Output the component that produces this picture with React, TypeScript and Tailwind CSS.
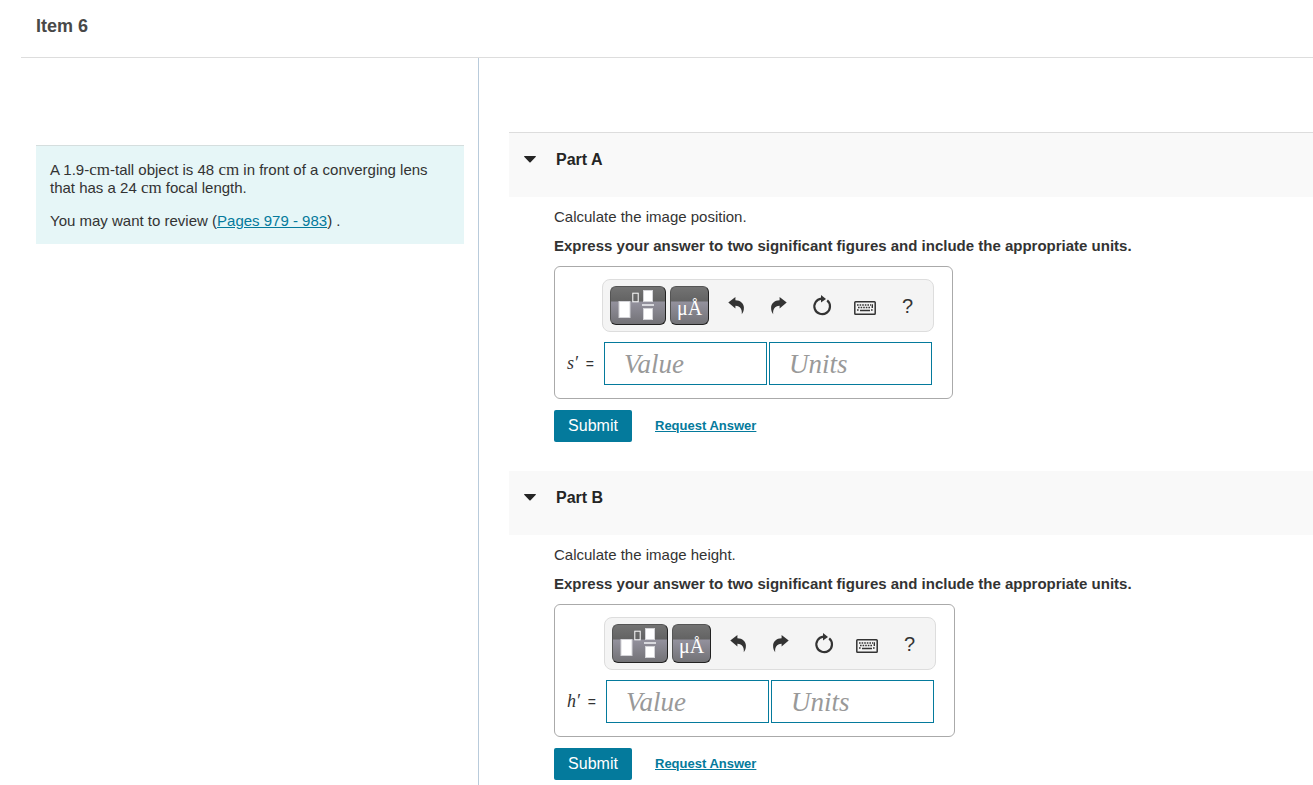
import { useState } from 'react';
import type { ReactNode } from 'react';

const ARIAL = "font-['Liberation_Sans',Arial,sans-serif]";
const SERIF = "font-['Liberation_Serif','Times_New_Roman',serif]";

function Unit({ children }: { children: ReactNode }) {
  return <span className={`${SERIF} text-[17px] leading-3`}>{children}</span>;
}

function TemplatesIcon() {
  return (
    <svg width="54" height="37" viewBox="0 0 54 37" fill="none" aria-hidden="true">
      <rect x="8" y="14.5" width="11" height="16" fill="#fff" stroke="#d4d4d8" />
      <rect x="21.8" y="6.2" width="5.4" height="8.6" stroke="#fff" />
      <rect x="32.5" y="3.5" width="9" height="11" fill="#fff" stroke="#d4d4d8" />
      <rect x="31" y="17" width="12" height="2" fill="#d9d9de" />
      <rect x="32.5" y="21.5" width="9" height="11" fill="#fff" stroke="#d4d4d8" />
    </svg>
  );
}

function UndoIcon({ flipped = false }: { flipped?: boolean }) {
  return (
    <svg
      width="16"
      height="18"
      viewBox="0 0 16 18"
      fill="#333"
      aria-hidden="true"
      className={flipped ? '-scale-x-100' : ''}
    >
      <path d="M0.3 5.6 7.4 0V3.3C12.6 3.4 15.8 6.5 15.9 10.6 16 13.2 15.2 15.6 13.8 17.2 14.2 12.4 12.4 9.2 7.4 8.8V11.4Z" />
    </svg>
  );
}

function ResetIcon() {
  return (
    <svg width="20" height="22" viewBox="0 0 20 22" fill="none" aria-hidden="true">
      <path d="M15.2 5.4A7.8 7.8 0 1 1 9.4 3.6" stroke="#333" strokeWidth="2.2" />
      <path d="M9 0 14 4 9 7.6Z" fill="#333" />
    </svg>
  );
}

function KeyboardIcon() {
  return (
    <svg width="22" height="14" viewBox="0 0 22 14" fill="none" aria-hidden="true">
      <rect x="0.8" y="0.8" width="20.4" height="12.4" rx="0.8" stroke="#333" strokeWidth="1.5" />
      <path d="M3 4H17M4 6.5H16M3 9H5M17 9H19" stroke="#333" strokeWidth="1.4" strokeDasharray="1.6 1" />
      <path d="M6 9.5H16M18.3 3.2V7" stroke="#333" strokeWidth="1.4" />
    </svg>
  );
}

const darkButton =
  'flex h-[39px] items-center justify-center rounded-md border border-[#555] border-r-[#222] border-b-[#222] bg-[linear-gradient(#737373_0px,#636363_14px,#93919d_15px,#727276_100%)] text-white';
const toolButton = 'flex h-[39px] w-[43px] items-center justify-center text-[#333]';

function Toolbar() {
  return (
    <div className="flex items-center rounded-lg border border-[#ddd] bg-[#f4f4f4] py-1.5 pr-1 pl-[7px]">
      <button type="button" aria-label="Templates" className={`${darkButton} w-14`}>
        <TemplatesIcon />
      </button>
      <button type="button" className={`${darkButton} ${SERIF} mr-[5px] ml-1 w-[39px] pt-1 text-[20px] leading-none`}>
        μÅ
      </button>
      <button type="button" aria-label="Undo" className={toolButton}>
        <UndoIcon />
      </button>
      <button type="button" aria-label="Redo" className={toolButton}>
        <UndoIcon flipped />
      </button>
      <button type="button" aria-label="Reset" className={toolButton}>
        <ResetIcon />
      </button>
      <button type="button" aria-label="Keyboard shortcuts" className={`${toolButton} pt-1`}>
        <KeyboardIcon />
      </button>
      <button type="button" className={`${toolButton} text-[20px]`}>
        ?
      </button>
    </div>
  );
}

const answerInput = `${SERIF} h-[43px] w-[163px] border border-[#047a9c] bg-white px-[19px] pt-0.5 text-[27px] italic text-[#333] placeholder:text-[#999] focus:outline-none`;

interface PartProps {
  title: string;
  question: string;
  symbol: string;
  first?: boolean;
}

function Part({ title, question, symbol, first = false }: PartProps) {
  const [open, setOpen] = useState(true);
  const [value, setValue] = useState('');
  const [units, setUnits] = useState('');
  const id = title.replace(' ', '-').toLowerCase();

  return (
    <section className="mb-[29px]">
      <h2 className={`bg-[#f9f9f9] ${first ? 'border-t border-[#ddd]' : ''}`}>
        <button
          type="button"
          aria-expanded={open}
          onClick={() => setOpen(!open)}
          className="flex h-16 w-full items-start pt-[15px] pl-[15px] text-left text-base font-bold text-[#252525]"
        >
          <svg width="12" height="7" viewBox="0 0 12 7" fill="#252525" className="mt-2 mr-5" aria-hidden="true">
            <path d="M0.5 0H11.5Q12.3 0.3 11.6 1L6.6 6.3Q6 6.8 5.4 6.3L0.4 1Q-0.3 0.3 0.5 0Z" />
          </svg>
          {title}
        </button>
      </h2>

      {open && (
        <form className="pl-[45px]" onSubmit={(e) => e.preventDefault()}>
          <p className="pt-[11px] leading-[18px]">{question}</p>
          <p className="mt-[11px] leading-[18px] font-bold">
            Express your answer to two significant figures and include the appropriate units.
          </p>

          <div className="mt-[11px] grid w-fit grid-cols-[auto_auto] items-center gap-y-2.5 rounded-md border border-[#aaa] pt-3 pr-[18px] pb-[13px] pl-3">
            <div className="col-start-2">
              <Toolbar />
            </div>
            <label htmlFor={`${id}-value`} className="pr-2 text-sm">
              <i className={`${SERIF} mr-1 text-[18px]`}>{symbol}′</i> =
            </label>
            <div className="flex gap-0.5 pl-0.5">
              <input
                id={`${id}-value`}
                type="text"
                placeholder="Value"
                value={value}
                onChange={(e) => setValue(e.target.value)}
                className={answerInput}
              />
              <input
                type="text"
                aria-label="Units"
                placeholder="Units"
                value={units}
                onChange={(e) => setUnits(e.target.value)}
                className={answerInput}
              />
            </div>
          </div>

          <div className="mt-[11px] flex items-center">
            <button type="submit" className="h-8 w-[78px] rounded-xs bg-[#047a9c] text-base text-white">
              Submit
            </button>
            <a href="#request-answer" className="ml-[23px] text-[13px] font-bold text-[#047a9c] underline">
              Request Answer
            </a>
          </div>
        </form>
      )}
    </section>
  );
}

export default function App() {
  return (
    <div className={`${ARIAL} flex min-h-screen flex-col bg-white pl-[21px] text-[15px] text-[#333]`}>
      <header className="border-b border-[#ddd] px-[15px] pt-3 pb-[17px]">
        <h1 className="text-[18px] leading-7 font-bold text-[#484848]">Item 6</h1>
      </header>

      <div className="flex flex-1">
        <aside className="w-[458px] shrink-0 border-r border-[#b9cbdb] pt-[87px] pr-[14px] pl-[15px]">
          <div className="border-t border-[#d5dede] bg-[#e6f6f7] px-[14px] pt-[15px] pb-[14px] leading-[18px]">
            <p>
              A 1.9-<Unit>cm</Unit>-tall object is 48 <Unit>cm</Unit> in front of a converging lens that has a 24{' '}
              <Unit>cm</Unit> focal length.
            </p>
            <p className="mt-[15px]">
              You may want to review (
              <a href="#pages-979-983" className="text-[#047a9c] underline">
                Pages 979 - 983
              </a>
              ) .
            </p>
          </div>
        </aside>

        <main className="min-w-0 flex-1 pt-[74px] pl-[30px]">
          <Part title="Part A" question="Calculate the image position." symbol="s" first />
          <Part title="Part B" question="Calculate the image height." symbol="h" />
        </main>
      </div>
    </div>
  );
}
